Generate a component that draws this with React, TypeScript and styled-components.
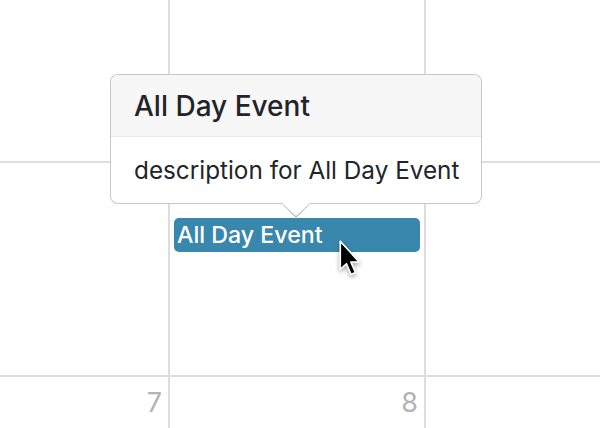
import React from 'react';
import styled, { createGlobalStyle } from 'styled-components';

const Global = createGlobalStyle`
  html, body { margin: 0; padding: 0; background: #fff; }
  body { font-family: Inter, "Liberation Sans", sans-serif; overflow: hidden; }
`;

const Stage = styled.div`
  position: relative;
  width: 600px;
  height: 428px;
  overflow: hidden;
  background: #fff;
`;

const Month = styled.div`
  display: grid;
  grid-template-columns: 168px 254px 1fr;
  grid-template-rows: 161px 212px 1fr;
  gap: 2px;
  background: #dddddd;
  width: 600px;
  height: 428px;
`;

const DayCell = styled.div<{ $top?: number; $side?: number }>`
  background: #fff;
  display: flex;
  flex-direction: column;
  padding: ${(p) => p.$top ?? 12}px ${(p) => p.$side ?? 6}px 0 4px;
  min-width: 0;
`;

const DayNumber = styled.div`
  text-align: right;
  font-size: 27px;
  line-height: 27px;
  color: #b3b3b3;
`;

const EventBar = styled.div`
  height: 34px;
  line-height: 34px;
  background: #3a87ad;
  border-radius: 5px;
  color: #fff;
  font-size: 23.2px;
  font-weight: 500;
  padding-left: 3px;
  white-space: nowrap;
  overflow: hidden;
`;

const Popover = styled.div`
  position: absolute;
  left: 110px;
  top: 74px;
  width: 372px;
  height: 130px;
  box-sizing: border-box;
  background: #fff;
  border: 1px solid rgba(0, 0, 0, 0.22);
  border-radius: 8px;
  display: flex;
  flex-direction: column;
  color: #212529;

  &::before,
  &::after {
    content: '';
    position: absolute;
    width: 0;
    height: 0;
    left: 171px;
    border-left: 14px solid transparent;
    border-right: 14px solid transparent;
  }
  &::before {
    bottom: -15px;
    border-top: 14px solid rgba(0, 0, 0, 0.25);
  }
  &::after {
    bottom: -13px;
    border-top: 13px solid #fff;
  }
`;

const PopHeader = styled.div`
  height: 61px;
  display: flex;
  align-items: center;
  padding-left: 23px;
  background: #f7f7f7;
  border-bottom: 1px solid #ebebeb;
  border-radius: 7px 7px 0 0;
  font-size: 28px;
  font-weight: 500;
`;

const PopBody = styled.div`
  flex: 1;
  display: flex;
  align-items: center;
  padding-left: 23px;
  font-size: 24.3px;
`;

const Cursor = styled.svg`
  position: absolute;
  left: 338px;
  top: 239px;
  filter: drop-shadow(0 2px 2px rgba(0, 0, 0, 0.35));
`;

export default function App() {
  return (
    <Stage>
      <Global />
      <Month>
        <DayCell />
        <DayCell />
        <DayCell />
        <DayCell />
        <DayCell $top={55} $side={4}>
          <EventBar>All Day Event</EventBar>
        </DayCell>
        <DayCell />
        <DayCell>
          <DayNumber>7</DayNumber>
        </DayCell>
        <DayCell>
          <DayNumber>8</DayNumber>
        </DayCell>
        <DayCell />
      </Month>
      <Popover>
        <PopHeader>All Day Event</PopHeader>
        <PopBody>description for All Day Event</PopBody>
      </Popover>
      <Cursor width="27" height="45" viewBox="0 0 24 40">
        <path
          d="M2 2 L2 27 L7.5 22 L11.5 31.5 L15.5 29.8 L11.5 20.5 L19 20.5 Z"
          fill="#000"
          stroke="#fff"
          strokeWidth="1.5"
          strokeLinejoin="round"
        />
      </Cursor>
    </Stage>
  );
}
